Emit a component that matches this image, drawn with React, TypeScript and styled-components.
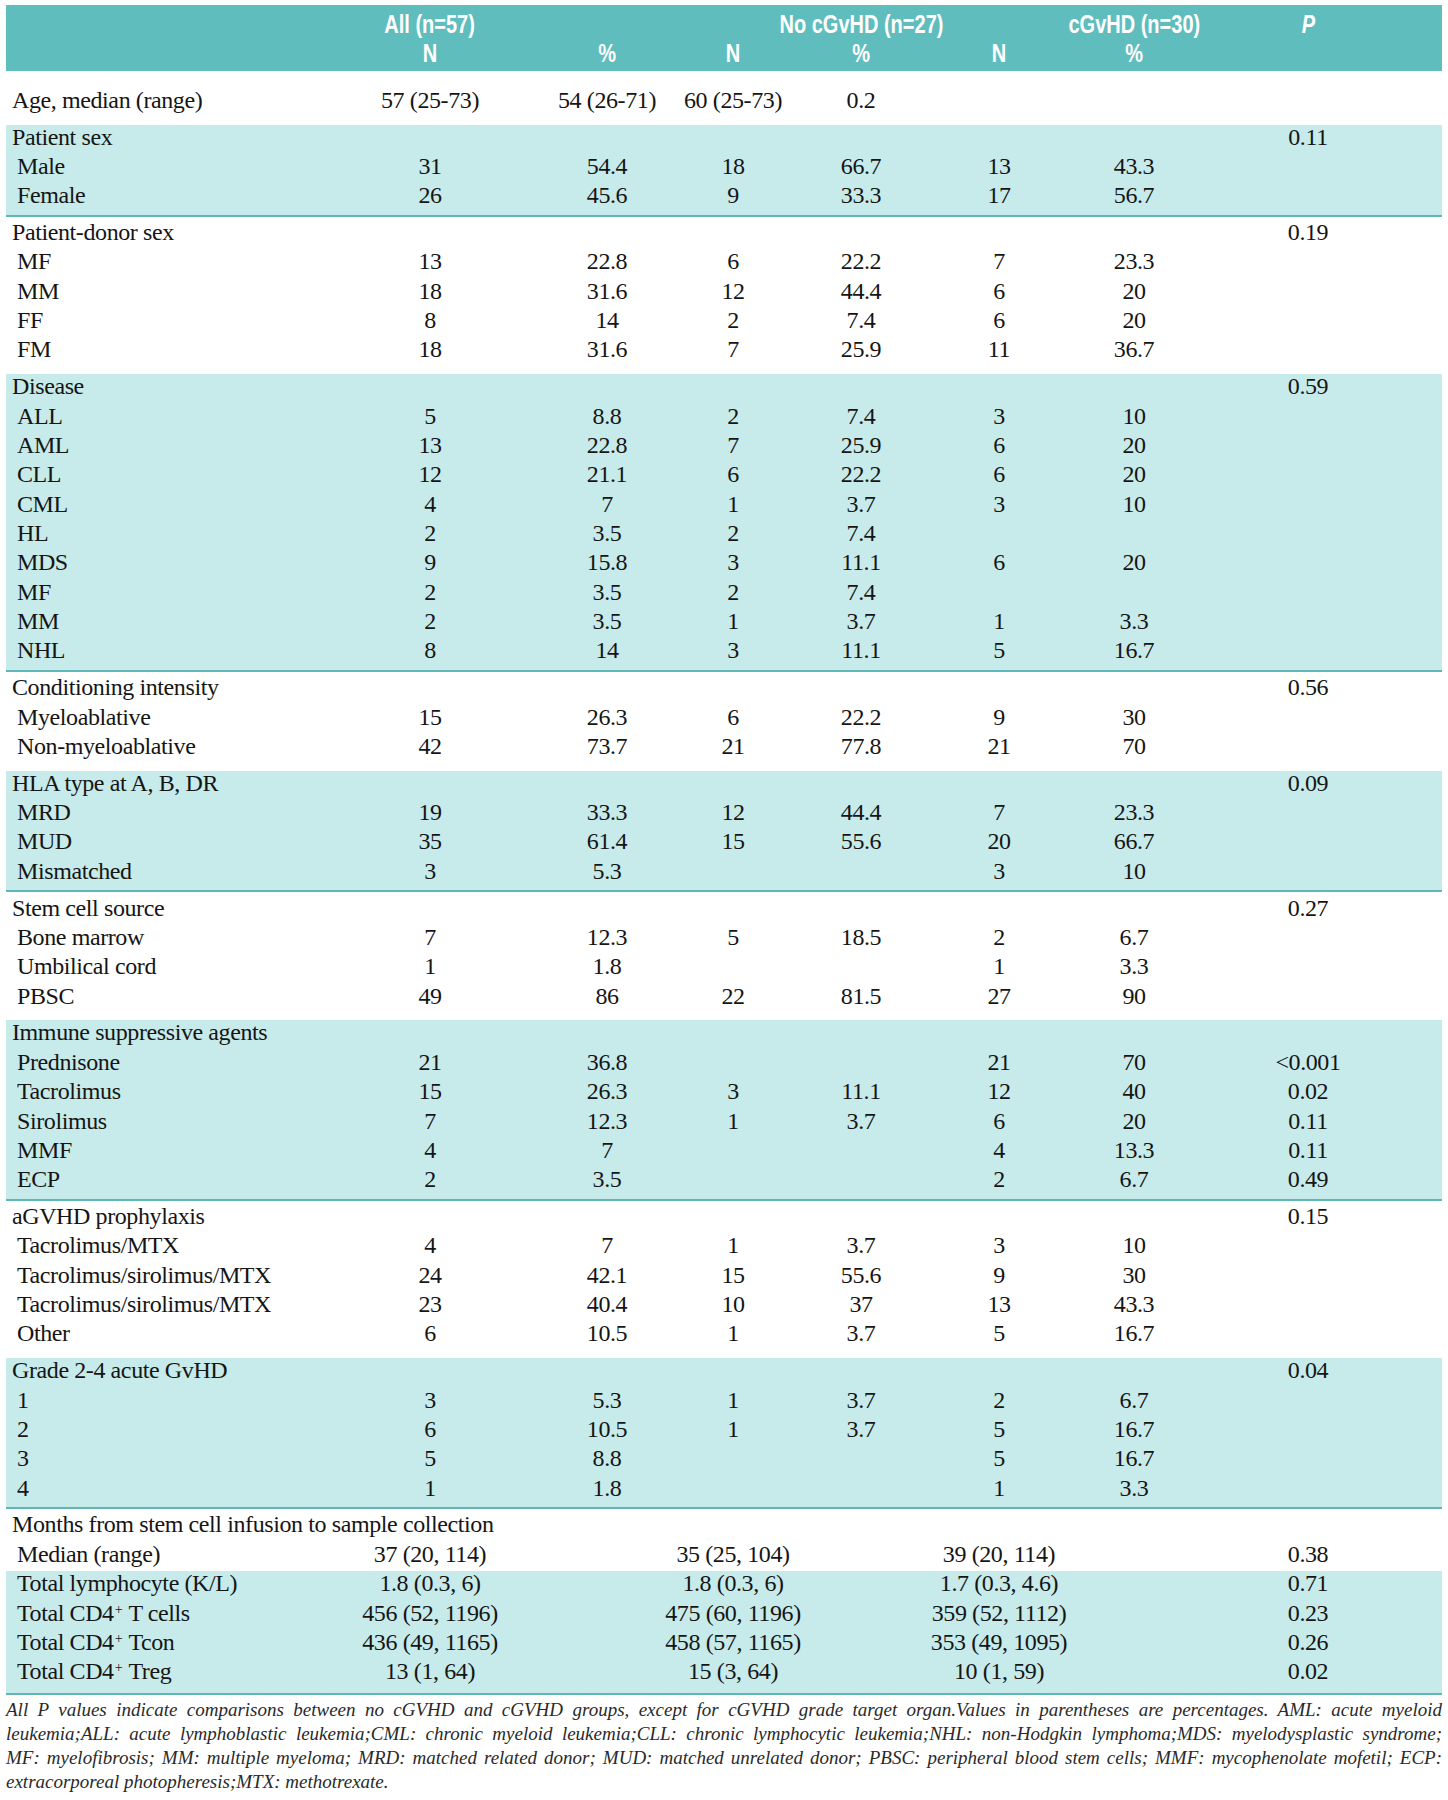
import React from 'react';
import styled, { createGlobalStyle } from 'styled-components';

const GlobalStyle = createGlobalStyle`
  html, body { margin: 0; padding: 0; background: #ffffff; }
  body { font-family: "Liberation Serif", "Times New Roman", serif; color: #151515; }
`;

const COLS = '304px 240px 114px 138px 118px 158px 112px 236px';
const TEAL = '#5fbdbd';
const TINT = '#c7ebeb';
const LINE = '#5fb7b7';

const Page = styled.div`
  width: 1448px;
  box-sizing: border-box;
  padding: 5px 6px 0 6px;
`;

const Header = styled.div`
  background: ${TEAL};
  padding: 4.8px 0 3.2px;
  margin-bottom: 16.7px;
`;

const HeaderRow = styled.div`
  display: grid;
  grid-template-columns: ${COLS};
  height: 29px;
  line-height: 29px;
  font-family: "Liberation Sans", Arial, sans-serif;
  font-weight: 700;
  font-size: 25px;
  color: #ffffff;
`;

const HeadCell = styled.div<{ $italic?: boolean }>`
  display: flex;
  justify-content: center;
  white-space: nowrap;
  font-style: ${(p) => (p.$italic ? 'italic' : 'normal')};
`;

/* condensed bold sans, as in the printed table header */
const HeadText = styled.span`
  display: inline-block;
  transform: scaleX(0.8);
  transform-origin: center;
`;

const Section = styled.div<{ $tinted?: boolean; $end?: boolean }>`
  background: ${(p) => (p.$tinted ? TINT : 'transparent')};
  padding-bottom: ${(p) => (p.$end ? '0' : '2px')};
  border-bottom: ${(p) => (p.$end ? 'none' : `2px solid ${p.$tinted ? LINE : 'transparent'}`)};
  margin-bottom: ${(p) => (p.$end ? '0' : '3.5px')};
`;

const Band = styled.div`
  background: ${TINT};
  padding-bottom: 4px;
  border-bottom: 2px solid ${LINE};
`;

const Row = styled.div`
  display: grid;
  grid-template-columns: ${COLS};
  height: 29.35px;
  line-height: 25px;
  font-size: 24px;
  letter-spacing: -0.4px;
`;

const Label = styled.div<{ $sub?: boolean; $span?: boolean }>`
  padding-left: ${(p) => (p.$sub ? '11px' : '6px')};
  white-space: nowrap;
  grid-column: ${(p) => (p.$span ? '1 / -1' : 'auto')};
`;

const Value = styled.div`
  display: flex;
  justify-content: center;
  white-space: nowrap;
`;

const Sup = styled.sup`
  font-size: 14px;
  line-height: 0;
  vertical-align: 0.5em;
  margin: 0 1px;
`;

const Footnote = styled.div`
  margin-top: 3px;
  font-style: italic;
  font-size: 19px;
  line-height: 24.3px;
  color: #2a2a2a;
`;

const NoteLine = styled.div<{ $last?: boolean }>`
  text-align: justify;
  text-align-last: ${(p) => (p.$last ? 'left' : 'justify')};
  white-space: nowrap;
`;

type RowData = {
  label: React.ReactNode;
  sub?: boolean;
  span?: boolean;
  v?: string[];
  p?: string;
};

type SectionData = { tinted: boolean; rows: RowData[] };

const r = (label: string, v: string[], p = ''): RowData => ({ label, sub: true, v, p });
const h = (label: string, p = ''): RowData => ({ label, p });

const sections: SectionData[] = [
  {
    tinted: false,
    rows: [{ label: 'Age, median (range)', v: ['57 (25-73)', '54 (26-71)', '60 (25-73)', '0.2', '', ''] }],
  },
  {
    tinted: true,
    rows: [
      h('Patient sex', '0.11'),
      r('Male', ['31', '54.4', '18', '66.7', '13', '43.3']),
      r('Female', ['26', '45.6', '9', '33.3', '17', '56.7']),
    ],
  },
  {
    tinted: false,
    rows: [
      h('Patient-donor sex', '0.19'),
      r('MF', ['13', '22.8', '6', '22.2', '7', '23.3']),
      r('MM', ['18', '31.6', '12', '44.4', '6', '20']),
      r('FF', ['8', '14', '2', '7.4', '6', '20']),
      r('FM', ['18', '31.6', '7', '25.9', '11', '36.7']),
    ],
  },
  {
    tinted: true,
    rows: [
      h('Disease', '0.59'),
      r('ALL', ['5', '8.8', '2', '7.4', '3', '10']),
      r('AML', ['13', '22.8', '7', '25.9', '6', '20']),
      r('CLL', ['12', '21.1', '6', '22.2', '6', '20']),
      r('CML', ['4', '7', '1', '3.7', '3', '10']),
      r('HL', ['2', '3.5', '2', '7.4', '', '']),
      r('MDS', ['9', '15.8', '3', '11.1', '6', '20']),
      r('MF', ['2', '3.5', '2', '7.4', '', '']),
      r('MM', ['2', '3.5', '1', '3.7', '1', '3.3']),
      r('NHL', ['8', '14', '3', '11.1', '5', '16.7']),
    ],
  },
  {
    tinted: false,
    rows: [
      h('Conditioning intensity', '0.56'),
      r('Myeloablative', ['15', '26.3', '6', '22.2', '9', '30']),
      r('Non-myeloablative', ['42', '73.7', '21', '77.8', '21', '70']),
    ],
  },
  {
    tinted: true,
    rows: [
      h('HLA type at A, B, DR', '0.09'),
      r('MRD', ['19', '33.3', '12', '44.4', '7', '23.3']),
      r('MUD', ['35', '61.4', '15', '55.6', '20', '66.7']),
      r('Mismatched', ['3', '5.3', '', '', '3', '10']),
    ],
  },
  {
    tinted: false,
    rows: [
      h('Stem cell source', '0.27'),
      r('Bone marrow', ['7', '12.3', '5', '18.5', '2', '6.7']),
      r('Umbilical cord', ['1', '1.8', '', '', '1', '3.3']),
      r('PBSC', ['49', '86', '22', '81.5', '27', '90']),
    ],
  },
  {
    tinted: true,
    rows: [
      h('Immune suppressive agents'),
      r('Prednisone', ['21', '36.8', '', '', '21', '70'], '<0.001'),
      r('Tacrolimus', ['15', '26.3', '3', '11.1', '12', '40'], '0.02'),
      r('Sirolimus', ['7', '12.3', '1', '3.7', '6', '20'], '0.11'),
      r('MMF', ['4', '7', '', '', '4', '13.3'], '0.11'),
      r('ECP', ['2', '3.5', '', '', '2', '6.7'], '0.49'),
    ],
  },
  {
    tinted: false,
    rows: [
      h('aGVHD prophylaxis', '0.15'),
      r('Tacrolimus/MTX', ['4', '7', '1', '3.7', '3', '10']),
      r('Tacrolimus/sirolimus/MTX', ['24', '42.1', '15', '55.6', '9', '30']),
      r('Tacrolimus/sirolimus/MTX', ['23', '40.4', '10', '37', '13', '43.3']),
      r('Other', ['6', '10.5', '1', '3.7', '5', '16.7']),
    ],
  },
  {
    tinted: true,
    rows: [
      h('Grade 2-4 acute GvHD', '0.04'),
      r('1', ['3', '5.3', '1', '3.7', '2', '6.7']),
      r('2', ['6', '10.5', '1', '3.7', '5', '16.7']),
      r('3', ['5', '8.8', '', '', '5', '16.7']),
      r('4', ['1', '1.8', '', '', '1', '3.3']),
    ],
  },
];

const cd4 = (rest: string) => (
  <>
    Total CD4<Sup>+</Sup> {rest}
  </>
);

const monthsRows: RowData[] = [
  { label: 'Months from stem cell infusion to sample collection', span: true },
  { label: 'Median (range)', sub: true, v: ['37 (20, 114)', '', '35 (25, 104)', '', '39 (20, 114)', ''], p: '0.38' },
];

const bandRows: RowData[] = [
  { label: 'Total lymphocyte (K/L)', sub: true, v: ['1.8 (0.3,  6)', '', '1.8 (0.3, 6)', '', '1.7 (0.3, 4.6)', ''], p: '0.71' },
  { label: cd4('T cells'), sub: true, v: ['456 (52, 1196)', '', '475 (60, 1196)', '', '359 (52, 1112)', ''], p: '0.23' },
  { label: cd4('Tcon'), sub: true, v: ['436 (49, 1165)', '', '458 (57, 1165)', '', '353 (49, 1095)', ''], p: '0.26' },
  { label: cd4('Treg'), sub: true, v: ['13 (1, 64)', '', '15 (3, 64)', '', '10 (1, 59)', ''], p: '0.02' },
];

const TableRow: React.FC<{ row: RowData }> = ({ row }) => {
  if (row.span) {
    return (
      <Row>
        <Label $span>{row.label}</Label>
      </Row>
    );
  }
  const vals = row.v ?? ['', '', '', '', '', ''];
  return (
    <Row>
      <Label $sub={row.sub}>{row.label}</Label>
      {vals.map((x, i) => (
        <Value key={i}>{x}</Value>
      ))}
      <Value>{row.p ?? ''}</Value>
    </Row>
  );
};

const footLines = [
  'All P values indicate comparisons between no cGVHD and cGVHD groups, except for cGVHD grade target organ.Values in parentheses are percentages. AML: acute myeloid',
  'leukemia;ALL: acute lymphoblastic leukemia;CML: chronic myeloid leukemia;CLL: chronic lymphocytic leukemia;NHL: non-Hodgkin lymphoma;MDS: myelodysplastic syndrome;',
  'MF: myelofibrosis; MM: multiple myeloma; MRD: matched related donor; MUD: matched unrelated donor; PBSC: peripheral blood stem cells; MMF: mycophenolate mofetil; ECP:',
  'extracorporeal photopheresis;MTX: methotrexate.',
];

const headTop = ['', 'All (n=57)', '', '', 'No cGvHD (n=27)', '', 'cGvHD (n=30)'];
const headSub = ['', 'N', '%', 'N', '%', 'N', '%', ''];

export default function App() {
  return (
    <>
      <GlobalStyle />
      <Page>
        <Header>
          <HeaderRow>
            {headTop.map((t, i) => (
              <HeadCell key={i}>{t && <HeadText>{t}</HeadText>}</HeadCell>
            ))}
            <HeadCell $italic>
              <HeadText>P</HeadText>
            </HeadCell>
          </HeaderRow>
          <HeaderRow>
            {headSub.map((t, i) => (
              <HeadCell key={i}>{t && <HeadText>{t}</HeadText>}</HeadCell>
            ))}
          </HeaderRow>
        </Header>

        {sections.map((s, si) => (
          <Section key={si} $tinted={s.tinted}>
            {s.rows.map((row, ri) => (
              <TableRow key={ri} row={row} />
            ))}
          </Section>
        ))}

        <Section $end>
          {monthsRows.map((row, ri) => (
            <TableRow key={ri} row={row} />
          ))}
          <Band>
            {bandRows.map((row, ri) => (
              <TableRow key={ri} row={row} />
            ))}
          </Band>
        </Section>

        <Footnote>
          {footLines.map((line, i) => (
            <NoteLine key={i} $last={i === footLines.length - 1}>
              {line}
            </NoteLine>
          ))}
        </Footnote>
      </Page>
    </>
  );
}
